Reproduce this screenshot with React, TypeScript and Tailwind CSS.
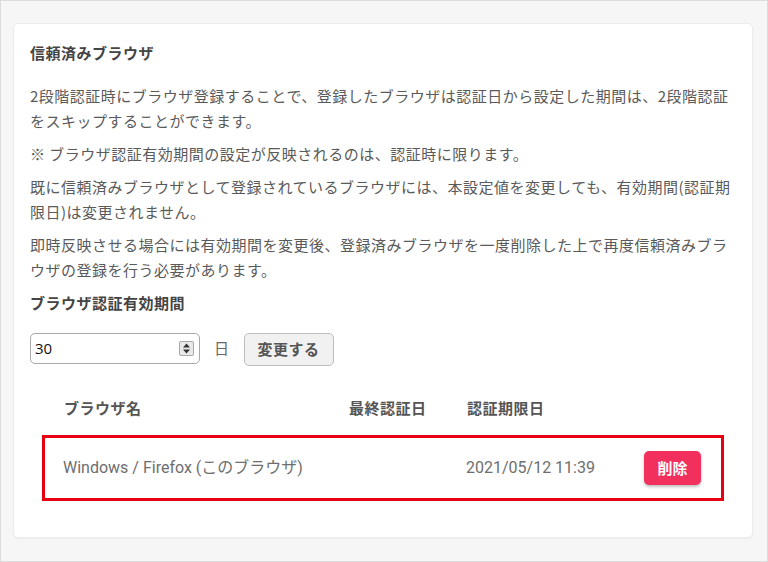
import React from "react";

const font = { fontFamily: '"Noto Sans CJK JP", Roboto, sans-serif' };

function Spinner() {
	return (
		<svg width="15" height="15" viewBox="0 0 15 15" className="shrink-0">
			<rect x="0.5" y="0.5" width="14" height="14" rx="1.5" fill="#e9e9e9" stroke="#a8a8a8" />
			<path d="M4 6.5 L7.5 2.5 L11 6.5 Z" fill="#333" />
			<path d="M4 8.5 L7.5 12.5 L11 8.5 Z" fill="#333" />
		</svg>
	);
}

function App() {
	return (
		<div
			className="w-[768px] h-[562px] border border-[#dcdcdc] bg-[#f6f6f6] pl-[12px] pr-[14px] pt-[22px] pb-[23px]"
			style={font}
		>
			<div className="h-full bg-white rounded-[5px] border border-[#ececec] shadow-[0_1px_2px_rgba(0,0,0,0.04)] px-[16px] pt-[16px] text-[15px] tracking-[0.5px] text-[#5a5a5a]">
				<h2 className="font-bold text-[#444] leading-[25px]">信頼済みブラウザ</h2>
				<div className="mt-[18px] flex flex-col gap-[8px] leading-[25px]">
					<p>
						2段階認証時にブラウザ登録することで、登録したブラウザは認証日から設定した期間は、2段階認証をスキップすることができます。
					</p>
					<p>※ ブラウザ認証有効期間の設定が反映されるのは、認証時に限ります。</p>
					<p>
						既に信頼済みブラウザとして登録されているブラウザには、本設定値を変更しても、有効期間(認証期限日)は変更されません。
					</p>
					<p>
						即時反映させる場合には有効期間を変更後、登録済みブラウザを一度削除した上で再度信頼済みブラウザの登録を行う必要があります。
					</p>
				</div>
				<h3 className="mt-[8px] font-bold text-[#444] leading-[25px]">ブラウザ認証有効期間</h3>
				<div className="mt-[18px] flex items-start">
					<div className="w-[170px] h-[31px] border border-[#a9a9a9] rounded-[5px] flex items-center pl-[4px] pr-[5px]">
						<span className="flex-1 text-[15px] tracking-normal text-[#111]" style={{ fontFamily: '"Open Sans", Roboto, sans-serif' }}>
							30
						</span>
						<Spinner />
					</div>
					<span className="ml-[14px] mt-[2px] leading-[25px] text-[#666]">日</span>
					<button className="ml-[14px] w-[90px] h-[33px] rounded-[5px] border border-[#bdbdbd] bg-[#f1f1f1] font-bold text-[#555] tracking-[0.5px]">
						変更する
					</button>
				</div>
				<div className="mt-[29px] mx-[12px]">
					<div className="flex pl-[22px] leading-[25px] font-bold text-[#555]">
						<span className="w-[285px]">ブラウザ名</span>
						<span className="w-[118px]">最終認証日</span>
						<span>認証期限日</span>
					</div>
					<div className="mt-[15px] h-[66px] border-[3px] border-[#e60012] flex items-center pl-[18px] pr-[20px] text-[#6e6e6e] tracking-normal" style={{ fontFamily: 'Roboto, "Noto Sans CJK JP", sans-serif' }}>
						<span className="w-[285px] text-[16px]">Windows / Firefox (このブラウザ)</span>
						<span className="w-[118px]"></span>
						<span className="flex-1 text-[16px]">2021/05/12 11:39</span>
						<button
							className="w-[57px] h-[34px] rounded-[5px] bg-[#f2305d] text-white font-bold text-[15px] shadow-[0_2px_3px_rgba(0,0,0,0.25)]"
							style={font}
						>
							削除
						</button>
					</div>
				</div>
			</div>
		</div>
	);
}

export default App;
